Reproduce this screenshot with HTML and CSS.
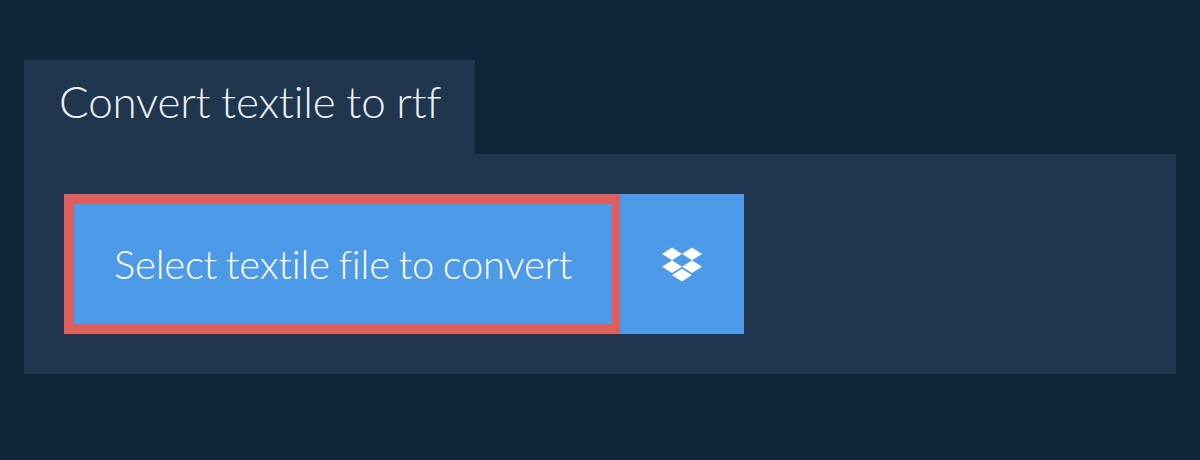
FILE: index.html
```html
<!DOCTYPE html>
<html lang="en">
<head>
    <meta charset="UTF-8">
    <meta name="viewport" content="width=device-width, initial-scale=1.0">
    <title>Convert textile to rtf</title>
    <link rel="stylesheet" href="styles.css">
</head>
<body>
    <div class="tab">
        <h1>Convert textile to rtf</h1>
    </div>
    <div class="panel">
        <div class="actions">
            <button class="select-file">Select textile <span class="lig">fi</span>le to convert</button>
            <button class="dropbox" aria-label="Dropbox">
                <svg viewBox="0 0 528 512" width="40" height="39" fill="#fff">
                    <path d="M264.4 116.3l-132 84.3 132 84.3-132 84.3L0 284.1l132.3-84.3L0 116.3 132.3 32l132.1 84.3zM131.6 395.7l132-84.3 132 84.3-132 84.3-132-84.3zm132.8-111.6l132-84.3-132-83.6L395.7 32 528 116.3l-132.3 84.3L528 284.8l-132.3 84.3-131.3-85z"/>
                </svg>
            </button>
        </div>
    </div>
</body>
</html>
```

FILE: styles.css
```css
body {
    margin: 0;
    padding: 60px 24px 0;
    background-color: #10253a;
    font-family: "Lato", sans-serif;
    font-weight: 300;
    font-variant-ligatures: none;
}

.tab {
    width: 451px;
    height: 94px;
    box-sizing: border-box;
    padding: 13px 0 0 35px;
    background-color: #20364f;
}

h1 {
    margin: 0;
    font-size: 44px;
    line-height: 56px;
    font-weight: 300;
    letter-spacing: -0.2px;
    word-spacing: -1px;
    color: #f0f2f4;
}

.panel {
    padding: 40px;
    background-color: #20364f;
}

.actions {
    display: flex;
    height: 140px;
}

button {
    border: none;
    padding: 0;
    color: #fff;
    background-color: #4c9ae8;
    font-family: inherit;
    font-weight: 300;
    font-variant-ligatures: none;
}

.select-file {
    width: 556px;
    box-sizing: border-box;
    border: solid #dc5f5d;
    border-width: 10px 8px 10px 10px;
    font-size: 40px;
    letter-spacing: -0.2px;
    word-spacing: -2px;
}

.lig {
    font-variant-ligatures: normal;
}

.dropbox {
    width: 124px;
    display: flex;
    align-items: center;
    justify-content: center;
}
```
